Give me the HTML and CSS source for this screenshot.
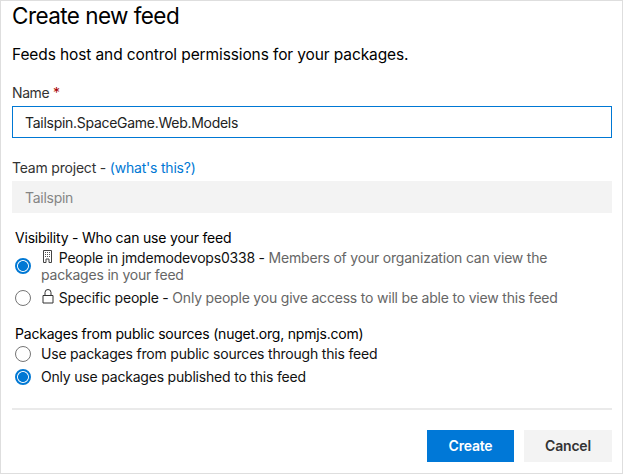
FILE: index.html
```html
<!DOCTYPE html>
<html lang="en">
<head>
<meta charset="utf-8">
<title>Create new feed</title>
<link rel="stylesheet" href="styles.css">
</head>
<body>
<form class="dialog">
  <h1 class="title">Create new feed</h1>
  <p class="intro">Feeds host and control permissions for your packages.</p>

  <label class="label" for="name"><span class="name-label">Name</span> <span class="required">*</span></label>
  <input class="field" id="name" type="text" value="Tailspin.SpaceGame.Web.Models">

  <label class="label project-label" for="project">Team project - <a class="link">(what's this?)</a></label>
  <input class="field field-disabled" id="project" type="text" value="Tailspin" disabled>

  <section class="group visibility">
    <h2 class="group-title">Visibility - Who can use your feed</h2>
    <label class="option">
      <input class="radio" type="radio" name="visibility" checked>
      <span class="option-text"><svg class="icon" width="14" height="16" viewBox="0 0 14 16"><path d="M2.500 14.500v-12h8v12h-2.500v-3.500h-3v3.500z" fill="none" stroke="#444" stroke-width="1"/><path d="M4 4h1v1H4zM6 4h1v1H6zM8 4h1v1H8zM4 6h1v1H4zM6 6h1v1H6zM8 6h1v1H8zM4 8h1v1H4zM6 8h1v1H6zM8 8h1v1H8z" fill="#555"/></svg> People in jmdemodevops0338 - <span class="hint">Members of your organization can view the<br>packages in your feed</span></span>
    </label>
    <label class="option">
      <input class="radio" type="radio" name="visibility">
      <span class="option-text"><svg class="icon" width="14" height="16" viewBox="0 0 14 16"><path d="M2 7.500h10v7.500h-10zM4 7.500V4.500a3 3 0 0 1 6 0v3" fill="none" stroke="#333" stroke-width="1"/></svg> Specific people - <span class="hint">Only people you give access to will be able to view this feed</span></span>
    </label>
  </section>

  <section class="group sources">
    <h2 class="group-title">Packages from public sources (nuget.org, npmjs.com)</h2>
    <label class="option">
      <input class="radio" type="radio" name="sources">
      <span class="option-text">Use packages from public sources through this feed</span>
    </label>
    <label class="option">
      <input class="radio" type="radio" name="sources" checked>
      <span class="option-text">Only use packages published to this feed</span>
    </label>
  </section>

  <footer class="actions">
    <button class="button primary" type="button">Create</button>
    <button class="button cancel" type="button">Cancel</button>
  </footer>
</form>
</body>
</html>
```
FILE: styles.css
```css
* { box-sizing: border-box; }
body {
  margin: 0;
  background: #fff;
  color: #111;
  font: 14px/20px Inter, "Liberation Sans", sans-serif;
  letter-spacing: -0.2px;
}
.dialog {
  width: 623px;
  height: 474px;
  padding: 0 10px 0 11px;
  border: 1px solid #dedede;
  display: flex;
  flex-direction: column;
}
.title {
  margin: 0;
  font-size: 22.5px;
  font-weight: 400;
  line-height: 30px;
  letter-spacing: -0.56px;
  color: #000;
}
.intro {
  margin: 13px 0 17px;
  font-size: 15.5px;
  line-height: 22px;
  letter-spacing: -0.11px;
  color: #000;
}
.label { color: #333; margin-bottom: 3px; }
.required { color: #a80000; }
.name-label { letter-spacing: -0.4px; }
.project-label { margin-top: 20px; }
.link { color: #0078d4; }
.field {
  width: 100%;
  height: 32px;
  margin: 0;
  padding: 0 12px;
  border: 1px solid #0078d4;
  border-radius: 0;
  background: #fff;
  color: #222;
  font: inherit;
  letter-spacing: -0.28px;
  outline: none;
}
.field-disabled {
  border-color: #f3f3f3;
  background: #f3f3f3;
  color: #858585;
}
.group {
  padding-left: 3px;
  display: flex;
  flex-direction: column;
}
.visibility { margin-top: 15px; }
.sources { margin-top: 12px; }
.group-title {
  margin: 0 0 1px;
  font-size: 14px;
  line-height: 20px;
  font-weight: 400;
  color: #000;
}
.option {
  display: flex;
  align-items: center;
  gap: 10px;
  line-height: 17px;
  margin-bottom: 6px;
}
.radio {
  appearance: none;
  flex: none;
  width: 16px;
  height: 16px;
  margin: 0;
  border: 1px solid #757575;
  border-radius: 50%;
  background: #fff;
}
.radio:checked {
  border: 2px solid #0078d4;
  background: radial-gradient(circle, #0078d4 4.6px, #fff 5.3px);
}
.icon { margin: -3px 0 0; vertical-align: -1px; }
.hint { color: #666; }
.actions {
  margin-top: 17px;
  padding-top: 20px;
  border-top: 2px solid #eaeaea;
  display: flex;
  justify-content: flex-end;
  gap: 10px;
}
.button {
  height: 32px;
  padding: 0;
  border: 0;
  font: 600 14px/32px Inter, "Liberation Sans", sans-serif;
  letter-spacing: -0.2px;
}
.primary { width: 87px; background: #0078d7; color: #fff; }
.cancel { width: 88px; background: #f3f3f3; color: #333; }
```
